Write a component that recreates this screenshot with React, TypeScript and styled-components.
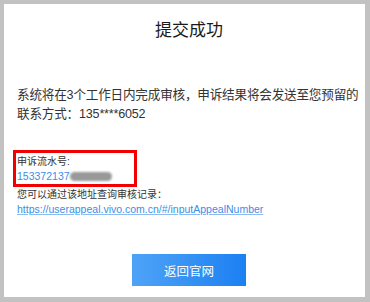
import React from 'react';
import styled, { createGlobalStyle } from 'styled-components';

const GlobalStyle = createGlobalStyle`
  html, body {
    margin: 0;
    padding: 0;
    background: #c2c2c2;
  }
  body {
    font-family: "Liberation Sans", "Noto Sans CJK SC", sans-serif;
  }
`;

const Frame = styled.div`
  width: 370px;
  height: 302px;
  box-sizing: border-box;
  padding: 4px 5px 5px 4px;
  background: #c2c2c2;
`;

const Card = styled.div`
  height: 100%;
  background: #ffffff;
  padding: 0 4px 0 13px;
  box-sizing: border-box;
  display: flex;
  flex-direction: column;
`;

const Title = styled.h1`
  margin: 15px 0 0;
  font-size: 17px;
  line-height: 24px;
  font-weight: 400;
  color: #1a1a1a;
  text-align: center;
`;

const Message = styled.p`
  margin: 43px 0 0;
  font-size: 12.6px;
  letter-spacing: -0.2px;
  line-height: 19px;
  color: #333;
`;

const Highlight = styled.div`
  margin: 26px 0 0 -4px;
  width: 116px;
  border: 3px solid #f00000;
  padding: 2px 1px 1px;
`;

const Label = styled.div`
  font-size: 10px;
  line-height: 14px;
  color: #333;
`;

const Serial = styled.div`
  display: flex;
  align-items: center;
  font-size: 10.5px;
  line-height: 14px;
  color: #3b8ee8;
`;

const Masked = styled.span`
  display: inline-block;
  width: 42px;
  height: 9px;
  border-radius: 5px;
  background: #999;
  filter: blur(0.8px);
`;

const Hint = styled(Label)`
  margin-top: 1px;
`;

const Link = styled.a`
  font-size: 10.5px;
  line-height: 15px;
  color: #3b8ee8;
  text-decoration: underline;
  text-decoration-color: #8dbaf0;
  align-self: flex-start;
`;

const Button = styled.button`
  margin: 37px auto 0;
  width: 114px;
  height: 32px;
  border: none;
  background: linear-gradient(90deg, #4ea3f6 0%, #1c80f2 100%);
  color: #ffffff;
  font-family: inherit;
  font-size: 12.5px;
  cursor: pointer;
`;

export default function App() {
  return (
    <>
      <GlobalStyle />
      <Frame>
        <Card>
          <Title>提交成功</Title>
          <Message>
            系统将在3个工作日内完成审核，申诉结果将会发送至您预留的联系方式：135****6052
          </Message>
          <Highlight>
            <Label>申诉流水号:</Label>
            <Serial>
              153372137
              <Masked />
            </Serial>
          </Highlight>
          <Hint>您可以通过该地址查询审核记录：</Hint>
          <Link href="#">https://userappeal.vivo.com.cn/#/inputAppealNumber</Link>
          <Button>返回官网</Button>
        </Card>
      </Frame>
    </>
  );
}
